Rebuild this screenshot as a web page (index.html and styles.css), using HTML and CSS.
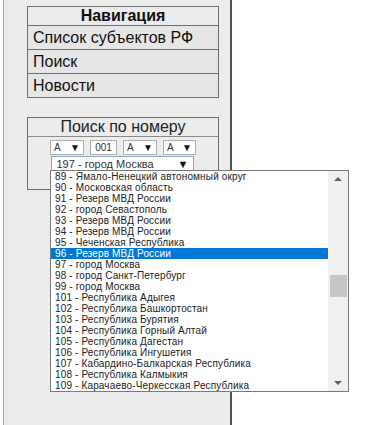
FILE: index.html
```html
<!DOCTYPE html>
<html lang="ru">
<head>
    <meta charset="UTF-8">
    <title>Навигация</title>
    <link rel="stylesheet" href="styles.css">
</head>
<body>
    <div id="container">
        <div class="sidebar">
            <div class="nav">
                <div class="nav-head">Навигация</div>
                <div class="nav-item">Список субъектов РФ</div>
                <div class="nav-item">Поиск</div>
                <div class="nav-item last">Новости</div>
            </div>

            <div class="search">
                <div class="search-title">Поиск по номеру</div>
                <div class="search-body">
                    <div class="plate">
                        <div class="sel w34"><span>А</span><i>▼</i></div>
                        <div class="num">001</div>
                        <div class="sel w34"><span>А</span><i>▼</i></div>
                        <div class="sel w33"><span>А</span><i>▼</i></div>
                    </div>
                    <div class="sel region"><span>197 - город Москва</span><i>▼</i></div>
                </div>
            </div>
        </div>
    </div>

    <!-- открытый список регионов -->
    <div class="dropdown">
        <ul class="options">
            <li>89 - Ямало-Ненецкий автономный округ</li>
            <li>90 - Московская область</li>
            <li>91 - Резерв МВД России</li>
            <li>92 - город Севастополь</li>
            <li>93 - Резерв МВД России</li>
            <li>94 - Резерв МВД России</li>
            <li>95 - Чеченская Республика</li>
            <li class="active">96 - Резерв МВД России</li>
            <li>97 - город Москва</li>
            <li>98 - город Санкт-Петербург</li>
            <li>99 - город Москва</li>
            <li>101 - Республика Адыгея</li>
            <li>102 - Республика Башкортостан</li>
            <li>103 - Республика Бурятия</li>
            <li>104 - Республика Горный Алтай</li>
            <li>105 - Республика Дагестан</li>
            <li>106 - Республика Ингушетия</li>
            <li>107 - Кабардино-Балкарская Республика</li>
            <li>108 - Республика Калмыкия</li>
            <li>109 - Карачаево-Черкесская Республика</li>
        </ul>
        <div class="scrollbar">
            <div class="arrow up"></div>
            <div class="thumb"></div>
            <div class="arrow down"></div>
        </div>
    </div>
</body>
</html>
```

FILE: styles.css
```css
html, body {
    height: 100%;
}

body {
    margin: 0;
    background-color: #fff;
    font-family: "Liberation Sans", Arial, sans-serif;
    color: #111;
}

#container {
    display: flex;
}

.sidebar {
    width: 229px;
    height: 425px;
    margin-left: 3px;
    padding-top: 6px;
    box-sizing: border-box;
    background-color: #ececec;
    border-left: 1px solid #a8a8a8;
    border-right: 2px solid #505050;
}

.nav {
    width: 190px;
    margin-left: 23px;
    border: 1px solid #6e6e6e;
    font-size: 16px;
}

.nav-head {
    height: 18px;
    line-height: 18px;
    text-align: center;
    font-weight: bold;
    border-bottom: 1px solid #6e6e6e;
}

.nav-item {
    height: 23px;
    line-height: 24px;
    padding-left: 5px;
    background-color: #e6e6e6;
    border-bottom: 1px solid #6e6e6e;
}

.nav-item.last {
    border-bottom: none;
}

.search {
    width: 190px;
    margin: 19px 0 0 23px;
    border: 1px solid #6e6e6e;
}

.search-title {
    height: 18px;
    line-height: 18px;
    font-size: 16px;
    text-align: center;
    color: #222;
    border-bottom: 1px solid #8a8a8a;
}

.search-body {
    display: flex;
    flex-direction: column;
    align-items: center;
    padding: 3px 0 17px;
}

.plate {
    display: flex;
    gap: 6px;
    margin-bottom: 1px;
}

.sel, .num {
    display: flex;
    align-items: center;
    justify-content: space-between;
    box-sizing: border-box;
    height: 15px;
    padding: 0 3px 0 3px;
    background-color: #fff;
    border: 1px solid #adadad;
    font-size: 10px;
    color: #333;
    overflow: hidden;
}

.sel i {
    font-style: normal;
    font-size: 10px;
    color: #111;
}

.w34 {
    width: 34px;
}

.w33 {
    width: 33px;
}

.num {
    width: 27px;
    justify-content: center;
    padding: 0;
}

.region {
    width: 143px;
    height: 16px;
    margin-left: -2px;
    border-color: #8fa6c8;
    font-size: 11px;
    padding-left: 5px;
    padding-right: 4px;
}

.region i {
    font-size: 11px;
}

.dropdown {
    position: absolute;
    top: 170px;
    left: 50px;
    width: 297px;
    height: 220px;
    display: flex;
    background-color: #fff;
    border: 1px solid #7a7a7a;
}

.options {
    width: 277px;
    margin: 0;
    padding: 0;
    list-style: none;
}

.options li {
    height: 11px;
    line-height: 11px;
    padding-left: 4px;
    font-size: 10px;
    letter-spacing: 0.15px;
    color: #222;
    white-space: nowrap;
}

.options li.active {
    background-color: #0078d7;
    color: #fff;
}

.scrollbar {
    position: relative;
    width: 20px;
    background-color: #f0f0f0;
}

.arrow {
    position: absolute;
    left: 6px;
    width: 0;
    height: 0;
    border-left: 4px solid transparent;
    border-right: 4px solid transparent;
}

.arrow.up {
    top: 6px;
    border-bottom: 4px solid #606060;
}

.arrow.down {
    bottom: 6px;
    border-top: 4px solid #606060;
}

.thumb {
    position: absolute;
    top: 104px;
    left: 2px;
    width: 17px;
    height: 22px;
    background-color: #c6c6c6;
}
```
